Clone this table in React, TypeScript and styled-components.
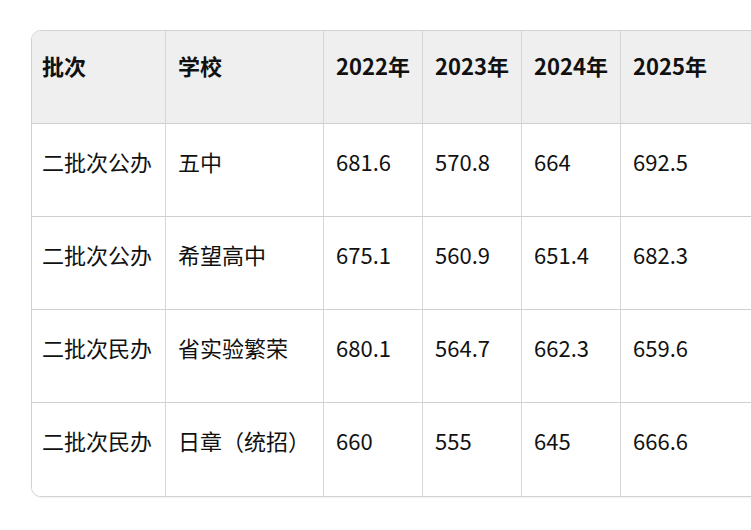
import * as React from "react";
import styled, { createGlobalStyle } from "styled-components";

const GlobalStyle = createGlobalStyle`
  html, body {
    margin: 0;
    padding: 0;
    background: #ffffff;
    overflow: hidden;
  }
  body {
    font-family: "Noto Sans CJK SC", "Noto Sans", sans-serif;
    color: #111111;
  }
`;

const Page = styled.div`
  width: 751px;
  height: 530px;
  padding: 30px 0 0 31px;
  box-sizing: border-box;
  overflow: hidden;
`;

const Table = styled.table`
  border-collapse: separate;
  border-spacing: 0;
  table-layout: fixed;
  width: 880px;
  border: 1px solid #d2d2d2;
  border-radius: 10px;
  overflow: hidden;
  box-shadow: 0 1px 2px rgba(0, 0, 0, 0.06);
`;

const HeadRow = styled.tr`
  background: #efefef;
  height: 93px;
`;

const BodyRow = styled.tr`
  background: #ffffff;
  height: 93px;
`;

const Cell = styled.td<{ $head?: boolean; $last?: boolean }>`
  vertical-align: top;
  text-align: left;
  padding: ${({ $head }) => ($head ? "19px" : "22px")} 12px 0 12px;
  font-size: 22px;
  line-height: 31px;
  font-weight: ${({ $head }) => ($head ? 700 : 400)};
  white-space: nowrap;
  border-right: 1px solid #d6d6d6;
  border-bottom: ${({ $last }) => ($last ? "none" : "1px solid #d0d0d0")};
  box-sizing: border-box;
  &:first-child {
    padding-left: 10px;
  }
  &:last-child {
    border-right: none;
  }
`;

const widths = [134, 158, 99, 99, 99, 291];
const headers = ["批次", "学校", "2022年", "2023年", "2024年", "2025年"];
const rows = [
  ["二批次公办", "五中", "681.6", "570.8", "664", "692.5"],
  ["二批次公办", "希望高中", "675.1", "560.9", "651.4", "682.3"],
  ["二批次民办", "省实验繁荣", "680.1", "564.7", "662.3", "659.6"],
  ["二批次民办", "日章（统招）", "660", "555", "645", "666.6"],
];

export default function App() {
  return (
    <>
      <GlobalStyle />
      <Page>
        <Table>
          <colgroup>
            {widths.map((w, i) => (
              <col key={i} style={{ width: w }} />
            ))}
          </colgroup>
          <thead>
            <HeadRow>
              {headers.map((h) => (
                <Cell as="th" key={h} $head>
                  {h}
                </Cell>
              ))}
            </HeadRow>
          </thead>
          <tbody>
            {rows.map((r, ri) => (
              <BodyRow key={ri}>
                {r.map((c, ci) => (
                  <Cell key={ci} $last={ri === rows.length - 1}>
                    {c}
                  </Cell>
                ))}
              </BodyRow>
            ))}
          </tbody>
        </Table>
      </Page>
    </>
  );
}
